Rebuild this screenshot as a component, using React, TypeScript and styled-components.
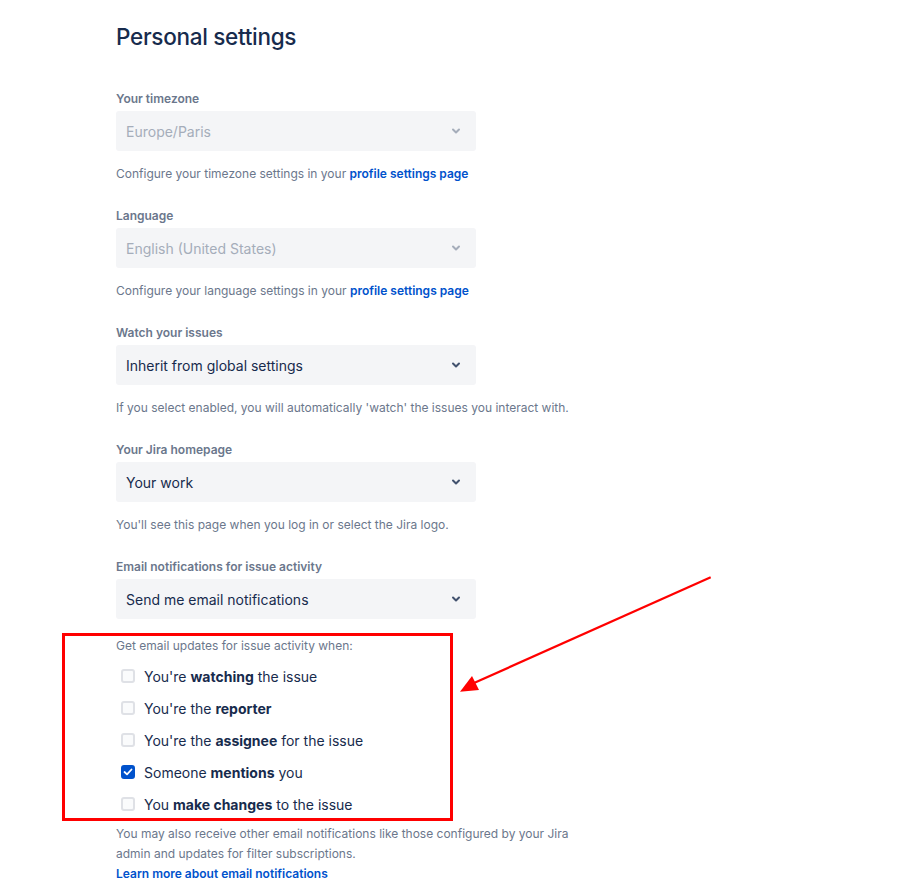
import React from "react";
import styled, { createGlobalStyle } from "styled-components";

const Global = createGlobalStyle`
  html, body { margin: 0; padding: 0; background: #ffffff; }
  body { font-family: Inter, "Noto Sans", "Liberation Sans", sans-serif; color: #172B4D; }
`;

const Page = styled.div`
  position: relative;
  width: 909px;
  min-height: 881px;
  padding: 23px 0 0 116px;
  box-sizing: border-box;
`;

const Title = styled.h1`
  margin: 0;
  font-size: 22.5px;
  line-height: 28px;
  font-weight: 500;
  color: #172B4D;
  letter-spacing: -0.3px;
`;

const Form = styled.div`
  display: flex;
  flex-direction: column;
  gap: 24px;
  margin-top: 40px;
  width: 470px;
`;

const Field = styled.div`
  display: flex;
  flex-direction: column;
`;

const Label = styled.div`
  font-size: 12px;
  line-height: 16px;
  font-weight: 600;
  color: #6B778C;
  margin-bottom: 4px;
`;

const Select = styled.div<{ $disabled?: boolean }>`
  width: 360px;
  height: 40px;
  box-sizing: border-box;
  background: #F4F5F7;
  border-radius: 3px;
  display: flex;
  align-items: center;
  justify-content: space-between;
  padding: 0 15px 0 10px;
  font-size: 14px;
  color: ${(p) => (p.$disabled ? "#A5ADBA" : "#172B4D")};
`;

const Helper = styled.div`
  font-size: 12px;
  line-height: 20px;
  color: #6B778C;
  margin-top: 13px;
`;

const Link = styled.a`
  color: #0052CC;
  font-weight: 600;
  text-decoration: none;
`;

const Group = styled.div`
  position: relative;
  margin-top: 17px;
`;

const GroupTitle = styled.div`
  font-size: 12px;
  line-height: 20px;
  color: #6B778C;
  margin-bottom: 4px;
`;

const Row = styled.label`
  display: flex;
  align-items: center;
  gap: 9px;
  height: 32px;
  padding-left: 5px;
  font-size: 14px;
  color: #172B4D;
  b { font-weight: 700; }
`;

const Box = styled.span<{ $checked?: boolean }>`
  width: 14px;
  height: 14px;
  box-sizing: border-box;
  border-radius: 3px;
  display: inline-flex;
  align-items: center;
  justify-content: center;
  background: ${(p) => (p.$checked ? "#0052CC" : "#FAFBFC")};
  border: 2px solid ${(p) => (p.$checked ? "#0052CC" : "#DFE1E6")};
`;

const Footer = styled.div`
  font-size: 12px;
  line-height: 20px;
  color: #6B778C;
  margin-top: 4px;
  width: 460px;
`;

const Highlight = styled.div`
  position: absolute;
  left: -54px;
  top: -3px;
  width: 391px;
  height: 188px;
  border: 3px solid #FF0000;
  box-sizing: border-box;
  pointer-events: none;
`;

const Arrow = styled.svg`
  position: absolute;
  left: 450px;
  top: 570px;
  pointer-events: none;
`;

const Chevron: React.FC<{ color: string }> = ({ color }) => (
  <svg width="10" height="8" viewBox="0 0 10 8">
    <path d="M2 2.5 L5 5.5 L8 2.5" fill="none" stroke={color} strokeWidth="2" strokeLinecap="round" strokeLinejoin="round" />
  </svg>
);

const Check = () => (
  <svg width="10" height="8" viewBox="0 0 10 8">
    <path d="M1.5 4 L4 6.3 L8.5 1.5" fill="none" stroke="#fff" strokeWidth="1.8" strokeLinecap="round" strokeLinejoin="round" />
  </svg>
);

const SelectField: React.FC<{ label: string; value: string; disabled?: boolean; children?: React.ReactNode }> = ({ label, value, disabled, children }) => (
  <Field>
    <Label>{label}</Label>
    <Select $disabled={disabled}>
      <span>{value}</span>
      <Chevron color={disabled ? "#A5ADBA" : "#42526E"} />
    </Select>
    {children}
  </Field>
);

const options: { pre: string; bold: string; post: string; checked?: boolean }[] = [
  { pre: "You're ", bold: "watching", post: " the issue" },
  { pre: "You're the ", bold: "reporter", post: "" },
  { pre: "You're the ", bold: "assignee", post: " for the issue" },
  { pre: "Someone ", bold: "mentions", post: " you", checked: true },
  { pre: "You ", bold: "make changes", post: " to the issue" },
];

export default function App() {
  return (
    <>
      <Global />
      <Page>
        <Title>Personal settings</Title>
        <Form>
          <SelectField label="Your timezone" value="Europe/Paris" disabled>
            <Helper>
              Configure your timezone settings in your <Link href="#">profile settings page</Link>
            </Helper>
          </SelectField>
          <SelectField label="Language" value="English (United States)" disabled>
            <Helper>
              Configure your language settings in your <Link href="#">profile settings page</Link>
            </Helper>
          </SelectField>
          <SelectField label="Watch your issues" value="Inherit from global settings">
            <Helper>If you select enabled, you will automatically 'watch' the issues you interact with.</Helper>
          </SelectField>
          <SelectField label="Your Jira homepage" value="Your work">
            <Helper>You'll see this page when you log in or select the Jira logo.</Helper>
          </SelectField>
          <SelectField label="Email notifications for issue activity" value="Send me email notifications">
            <Group>
              <GroupTitle>Get email updates for issue activity when:</GroupTitle>
              {options.map((o) => (
                <Row key={o.bold}>
                  <Box $checked={o.checked}>{o.checked && <Check />}</Box>
                  <span>
                    {o.pre}
                    <b>{o.bold}</b>
                    {o.post}
                  </span>
                </Row>
              ))}
              <Highlight />
            </Group>
            <Footer>
              You may also receive other email notifications like those configured by your Jira admin and updates for filter subscriptions.
              <br />
              <Link href="#">Learn more about email notifications</Link>
            </Footer>
          </SelectField>
        </Form>
        <Arrow width="270" height="130" viewBox="0 0 270 130">
          <line x1="260.7" y1="7.3" x2="24" y2="113" stroke="#FF0000" strokeWidth="2.2" />
          <polygon points="10,121.7 22,106 29,120" fill="#FF0000" />
        </Arrow>
      </Page>
    </>
  );
}
